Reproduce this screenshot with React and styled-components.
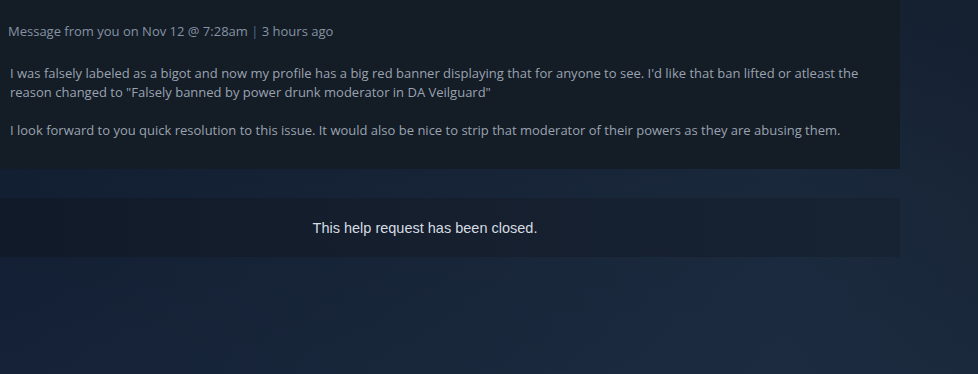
import React from "react";
import styled, { createGlobalStyle } from "styled-components";

const Global = createGlobalStyle`
  html, body { margin: 0; padding: 0; }
  body {
    width: 978px;
    height: 374px;
    overflow: hidden;
    background: linear-gradient(90deg, #132035 0%, #18263a 45%, #1c2b40 80%, #1a283b 100%);
    font-family: "Open Sans", "Liberation Sans", Arial, sans-serif;
  }
`;

const Page = styled.div`
  width: 978px;
  height: 374px;
  display: flex;
  flex-direction: column;
  background: linear-gradient(180deg, rgba(10,16,26,0.35) 0%, rgba(10,16,26,0.1) 50%, rgba(30,45,66,0.15) 100%);
`;

const Card = styled.div`
  width: 900px;
  height: 169px;
  box-sizing: border-box;
  background: #141c26;
  padding: 23px 30px 0 8px;
  display: flex;
  flex-direction: column;
`;

const Meta = styled.div`
  font-size: 13px;
  line-height: 17px;
  color: #8593a4;
`;

const Sep = styled.span`
  color: #4c6f97;
`;

const Body = styled.div`
  margin-top: 24px;
  padding-left: 2px;
  font-size: 13px;
  line-height: 19px;
  color: #9aa3b0;
`;

const Para = styled.p`
  margin: 0 0 19px 0;
`;

const Closed = styled.div`
  margin-top: 29px;
  width: 900px;
  height: 59px;
  background: linear-gradient(90deg, #111a28 0%, #151f2e 50%, #172233 100%);
  display: flex;
  align-items: center;
  justify-content: center;
  padding-right: 50px;
  box-sizing: border-box;
  font-family: "Liberation Sans", Arial, sans-serif;
  font-size: 14.5px;
  color: #d6dbe1;
`;

export default function App() {
  return (
    <>
      <Global />
      <Page>
        <Card>
          <Meta>
            Message from you on Nov 12 @ 7:28am <Sep>|</Sep> 3 hours ago
          </Meta>
          <Body>
            <Para>
              I was falsely labeled as a bigot and now my profile has a big red banner displaying that for anyone to see. I'd like that ban lifted or atleast the reason changed to "Falsely banned by power drunk moderator in DA Veilguard"
            </Para>
            <Para>
              I look forward to you quick resolution to this issue. It would also be nice to strip that moderator of their powers as they are abusing them.
            </Para>
          </Body>
        </Card>
        <Closed>This help request has been closed.</Closed>
      </Page>
    </>
  );
}
